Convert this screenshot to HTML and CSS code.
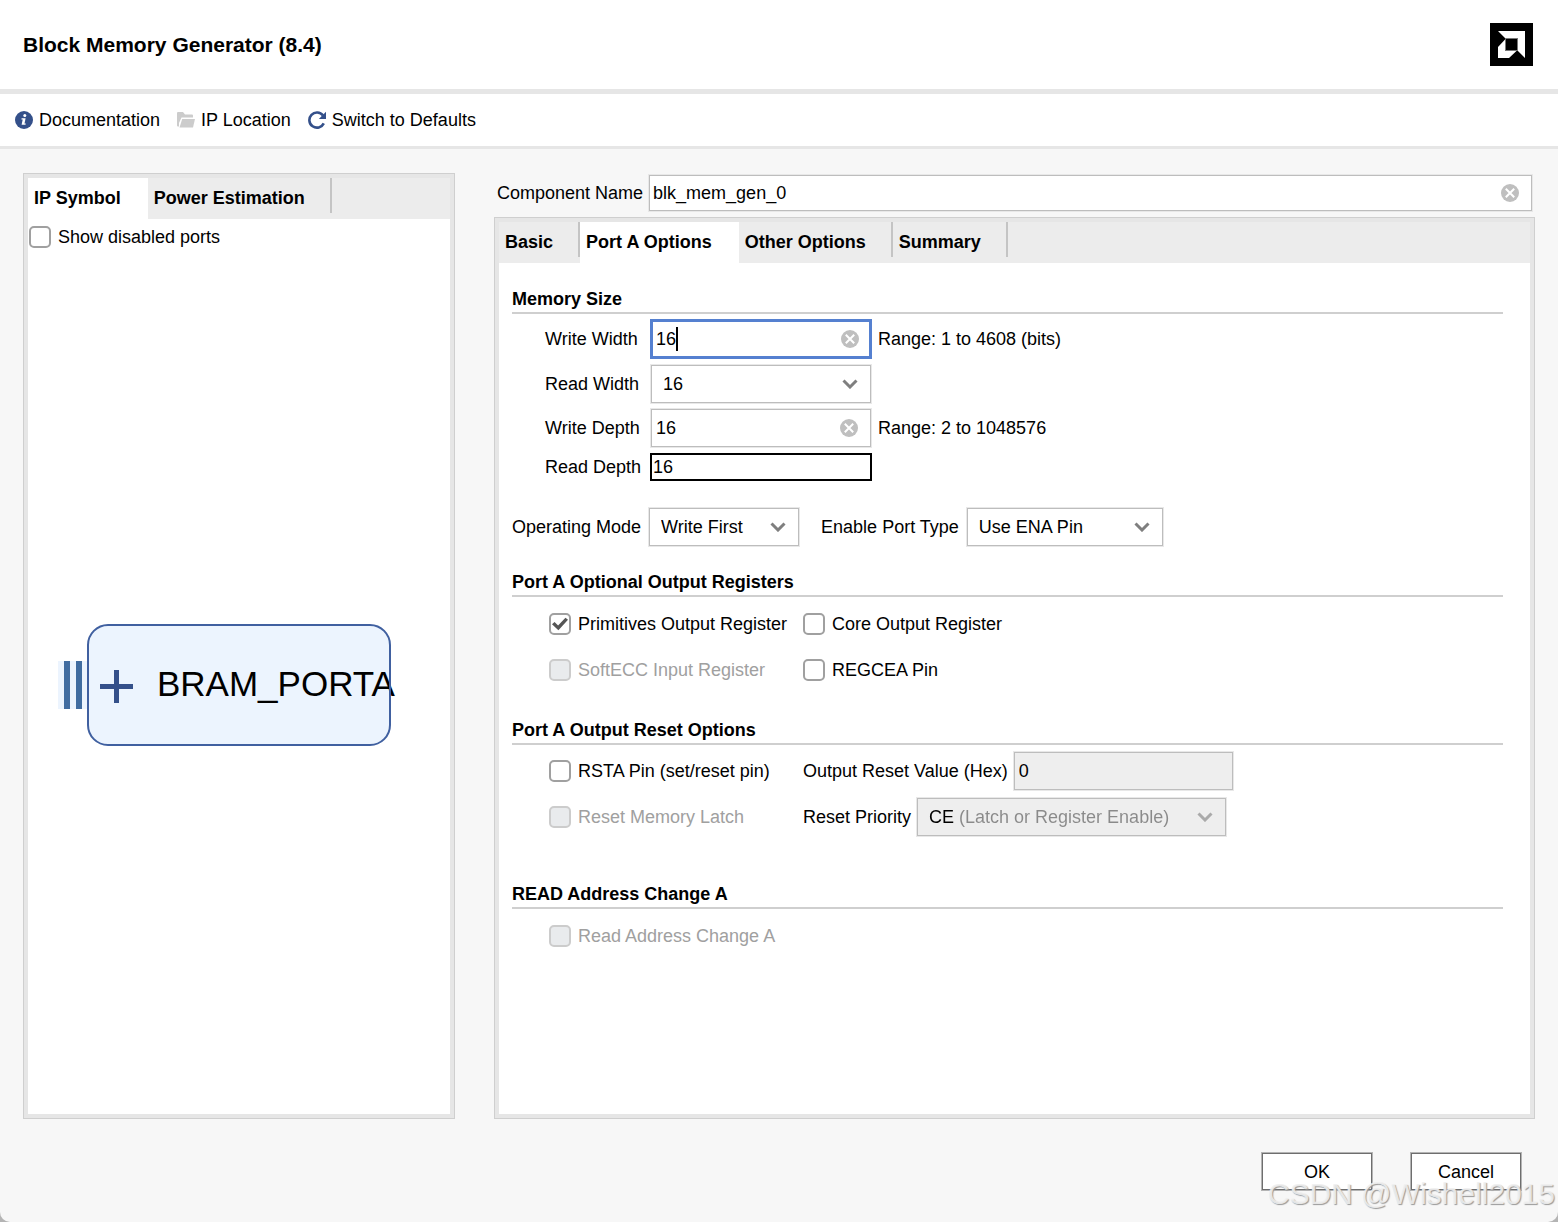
FILE: index.html
```html
<!DOCTYPE html>
<html lang="en">
<head>
    <meta charset="UTF-8">
    <meta name="viewport" content="width=device-width, initial-scale=1.0">
    <title>Block Memory Generator (8.4)</title>
    <link rel="stylesheet" href="styles.css">
</head>
<body>
    <div class="window">
        <header class="header">
            <h1>Block Memory Generator (8.4)</h1>
            <svg class="logo" viewBox="0 0 43 43">
                <rect width="43" height="43" fill="#000"/>
                <path d="M8 8H35V35L27.5 27.5V15.5H15.5Z" fill="#fff"/>
                <path d="M8 24L15.5 16V27.5H27L19 35H8Z" fill="#fff"/>
                <rect x="15.5" y="15.5" width="12" height="12" fill="#000" stroke="#777" stroke-width="1"/>
            </svg>
        </header>

        <nav class="toolbar">
            <button class="tool">
                <svg class="icon" viewBox="0 0 18 18">
                    <circle cx="9" cy="9" r="9" fill="#34508a"/>
                    <circle cx="9.8" cy="4.6" r="1.5" fill="#fff"/>
                    <path d="M6.6 7.2H10.6L9.5 12.4H10.8L10.5 13.8H6.6L7.7 8.6H6.4Z" fill="#fff"/>
                </svg>
                Documentation
            </button>
            <button class="tool">
                <svg class="icon" viewBox="0 0 18 18">
                    <path d="M0 2Q0 1 1 1H6L8 3.5H15Q16 3.5 16 4.5V6.5H4.5L2 12V15.5H1Q0 15.5 0 14.5Z" fill="#ccc"/>
                    <path d="M5.2 8H18L16 16.5H2.5Z" fill="#ccc"/>
                </svg>
                IP Location
            </button>
            <button class="tool">
                <svg class="icon" viewBox="0 0 18 18">
                    <path d="M15 4.4A7.6 7.6 0 1 0 15.8 12.4" fill="none" stroke="#34508a" stroke-width="2.6"/>
                    <path d="M18 .8V8H10.8Z" fill="#34508a"/>
                </svg>
                Switch to Defaults
            </button>
        </nav>

        <main class="main">
            <section class="panel symbol-panel">
                <div class="tabs">
                    <button class="tab active">IP Symbol</button>
                    <button class="tab">Power Estimation</button>
                </div>
                <label class="check ports"><input type="checkbox">Show disabled ports</label>
                <div class="canvas">
                    <svg class="symbol" viewBox="0 0 362 122">
                        <rect x="0" y="37" width="30" height="48" fill="#ecf4fe"/>
                        <rect x="6" y="37" width="6" height="48" fill="#406ca0"/>
                        <rect x="18" y="37" width="6" height="48" fill="#406ca0"/>
                        <rect x="30" y="1" width="302" height="120" rx="20" fill="#ecf4fe"/>
                        <path d="M42 62.5H75M58.5 46V79" stroke="#34508a" stroke-width="5"/>
                        <text class="symbol-text" x="99" y="72">BRAM_PORTA</text>
                        <rect x="30" y="1" width="302" height="120" rx="20" fill="none" stroke="#4060a0" stroke-width="2"/>
                    </svg>
                </div>
            </section>

            <div class="config">
                <div class="name-row">
                    <label for="name">Component Name</label>
                    <div class="field name-field">
                        <input class="input" type="text" id="name" value="blk_mem_gen_0">
                        <button class="clear" aria-label="Clear"><svg viewBox="0 0 18 18"><circle cx="9" cy="9" r="9"/><path d="M4.8 4.8L13.2 13.2M13.2 4.8L4.8 13.2"/></svg></button>
                    </div>
                </div>

                <section class="panel">
                    <div class="tabs">
                        <button class="tab">Basic</button>
                        <button class="tab active">Port A Options</button>
                        <button class="tab">Other Options</button>
                        <button class="tab">Summary</button>
                    </div>

                    <form class="options">
                        <h2>Memory Size</h2>
                        <div class="sizes">
                            <div class="row">
                                <label for="write-width">Write Width</label>
                                <div class="field">
                                    <input class="input focused" type="text" id="write-width" value="16">
                                    <span class="caret"></span>
                                    <button type="button" class="clear" aria-label="Clear"><svg viewBox="0 0 18 18"><circle cx="9" cy="9" r="9"/><path d="M4.8 4.8L13.2 13.2M13.2 4.8L4.8 13.2"/></svg></button>
                                </div>
                                <span>Range: 1 to 4608 (bits)</span>
                            </div>
                            <div class="row">
                                <label for="read-width">Read Width</label>
                                <div class="field inset">
                                    <select class="input" id="read-width"><option>16</option></select>
                                    <svg class="chevron" viewBox="0 0 16 10"><path d="M1.5 1.5L8 8L14.5 1.5"/></svg>
                                </div>
                            </div>
                            <div class="row">
                                <label for="write-depth">Write Depth</label>
                                <div class="field inset">
                                    <input class="input" type="text" id="write-depth" value="16">
                                    <button type="button" class="clear" aria-label="Clear"><svg viewBox="0 0 18 18"><circle cx="9" cy="9" r="9"/><path d="M4.8 4.8L13.2 13.2M13.2 4.8L4.8 13.2"/></svg></button>
                                </div>
                                <span>Range: 2 to 1048576</span>
                            </div>
                            <div class="row">
                                <label for="read-depth">Read Depth</label>
                                <div class="field">
                                    <input class="input plain" type="text" id="read-depth" value="16" readonly>
                                </div>
                            </div>
                        </div>

                        <div class="modes">
                            <div class="pair">
                                <label for="mode">Operating Mode</label>
                                <div class="field mode">
                                    <select class="input" id="mode"><option>Write First</option></select>
                                    <svg class="chevron" viewBox="0 0 16 10"><path d="M1.5 1.5L8 8L14.5 1.5"/></svg>
                                </div>
                            </div>
                            <div class="pair">
                                <label for="port-type">Enable Port Type</label>
                                <div class="field port-type">
                                    <select class="input" id="port-type"><option>Use ENA Pin</option></select>
                                    <svg class="chevron" viewBox="0 0 16 10"><path d="M1.5 1.5L8 8L14.5 1.5"/></svg>
                                </div>
                            </div>
                        </div>

                        <h2>Port A Optional Output Registers</h2>
                        <div class="checks">
                            <label class="check"><input type="checkbox" checked>Primitives Output Register</label>
                            <label class="check"><input type="checkbox">Core Output Register</label>
                            <label class="check disabled"><input type="checkbox" disabled>SoftECC Input Register</label>
                            <label class="check"><input type="checkbox">REGCEA Pin</label>
                        </div>

                        <h2>Port A Output Reset Options</h2>
                        <div class="checks resets">
                            <label class="check"><input type="checkbox">RSTA Pin (set/reset pin)</label>
                            <div class="pair">
                                <label for="reset-value">Output Reset Value (Hex)</label>
                                <div class="field reset-value">
                                    <input class="input" type="text" id="reset-value" value="0" disabled>
                                </div>
                            </div>
                            <label class="check disabled"><input type="checkbox" disabled>Reset Memory Latch</label>
                            <div class="pair">
                                <label for="priority">Reset Priority</label>
                                <div class="field priority">
                                    <select class="input" id="priority" disabled><option>CE (Latch or Register Enable)</option></select>
                                    <svg class="chevron" viewBox="0 0 16 10"><path d="M1.5 1.5L8 8L14.5 1.5"/></svg>
                                </div>
                            </div>
                        </div>

                        <h2>READ Address Change A</h2>
                        <div class="checks">
                            <label class="check disabled"><input type="checkbox" disabled>Read Address Change A</label>
                        </div>
                    </form>
                </section>
            </div>
        </main>

        <footer class="footer">
            <button class="btn">OK</button>
            <button class="btn">Cancel</button>
        </footer>
        <div class="watermark">CSDN @Wishell2015</div>
    </div>
</body>
</html>
```
FILE: styles.css
```css
:root {
    --bg-window: #f7f7f7;
    --bg-tabs: #ececec;
    --frame: #e6e6e6;
    --line: #cfcfcf;
    --border: #bdbdbd;
    --blue: #5580d0;
    --text-disabled: #a0a0a0;
}

* {
    box-sizing: border-box;
}

body {
    margin: 0;
    background-color: #b4b4b4;
    font-family: "Liberation Sans", Arial, sans-serif;
    font-size: 18px;
    line-height: 22px;
    color: #000;
}

button, input, select {
    font: inherit;
    color: inherit;
    margin: 0;
}

button {
    border: none;
    background: none;
    padding: 0;
    cursor: pointer;
}

.window {
    position: relative;
    display: flex;
    flex-direction: column;
    min-height: 100vh;
    background-color: var(--bg-window);
    border-radius: 0 0 10px 10px;
}

/* Header */
.header {
    display: flex;
    justify-content: space-between;
    align-items: center;
    padding: 23px 25px 23px 23px;
    background-color: #fff;
    border-bottom: 5px solid var(--frame);
}

.header h1 {
    margin: 0;
    font-size: 21px;
}

.logo {
    width: 43px;
    height: 43px;
}

.toolbar {
    display: flex;
    gap: 17px;
    padding: 15px;
    background-color: #fff;
    border-bottom: 3px solid var(--frame);
}

.tool {
    display: flex;
    align-items: center;
    gap: 6px;
}

.icon {
    width: 18px;
    height: 18px;
}

/* Panels */
.main {
    flex: 1;
    display: flex;
    gap: 39px;
    padding: 24px 23px 0;
}

.panel {
    flex: 1;
    display: flex;
    flex-direction: column;
    background-color: #fff;
    border: 1px solid var(--line);
    box-shadow: inset 0 0 0 4px var(--frame);
    padding: 4px;
}

.symbol-panel {
    flex: none;
    width: 432px;
}

.config {
    flex: 1;
    display: flex;
    flex-direction: column;
}

.tabs {
    display: flex;
    height: 41px;
    background-color: var(--bg-tabs);
}

.tab {
    position: relative;
    padding: 0 27px 2px 6px;
    font-weight: bold;
}

.tab:not(.active)::after {
    content: "";
    position: absolute;
    top: 0;
    right: 0;
    width: 2px;
    height: 35px;
    background-color: #c4c4c4;
}

.tab.active {
    background-color: #fff;
}

.canvas {
    flex: 1;
    display: flex;
    align-items: center;
    justify-content: center;
}

.symbol {
    width: 362px;
    height: 122px;
}

.symbol-text {
    font-size: 35px;
}

/* Fields */
.name-row {
    display: flex;
    align-items: center;
    gap: 6px;
    height: 40px;
    margin-bottom: 4px;
    padding: 0 3px;
}

.field {
    position: relative;
    width: 222px;
}

.name-field {
    flex: 1;
}

.input {
    display: block;
    width: 100%;
    height: 38px;
    padding: 0 4px;
    border: 1px solid var(--border);
    border-radius: 0;
    box-shadow: 0 0 0 1px #e8e8e8;
    background-color: #fff;
    outline: none;
}

.name-field .input {
    height: 36px;
    padding: 0 3px;
}

select.input {
    appearance: none;
    padding: 0 11px;
}

.inset {
    padding: 0 1px;
}

.input.focused {
    height: 40px;
    padding: 0 3px;
    border: 3px solid var(--blue);
    box-shadow: none;
}

.input.plain {
    height: 28px;
    padding: 0 1px;
    border: 2px solid #000;
    box-shadow: none;
}

.input:disabled {
    background-color: #eee;
    color: #000;
    opacity: 1;
}

.caret {
    position: absolute;
    left: 26px;
    top: 8px;
    width: 2px;
    height: 24px;
    background-color: #000;
}

.clear {
    position: absolute;
    top: 0;
    bottom: 0;
    right: 13px;
    display: flex;
    align-items: center;
}

.clear svg {
    width: 18px;
    height: 18px;
    fill: #bfbfbf;
    stroke: #fff;
    stroke-width: 2;
}

.clear circle {
    stroke: none;
}

.chevron {
    position: absolute;
    top: 14px;
    right: 13px;
    width: 16px;
    height: 10px;
    fill: none;
    stroke: #7f7f7f;
    stroke-width: 3;
    pointer-events: none;
}

.inset .clear,
.inset .chevron {
    right: 14px;
}

/* Port A options */
.options {
    padding: 0 27px 0 13px;
}

.options h2 {
    margin: 23px 0 0;
    padding: 2px 0;
    border-bottom: 2px solid var(--line);
    font-size: 18px;
}

.sizes {
    display: flex;
    flex-direction: column;
    gap: 6px;
    padding: 5px 0 0 33px;
}

.row {
    display: flex;
    align-items: center;
}

.row label {
    width: 105px;
}

.row span:last-child {
    margin-left: 6px;
}

.modes {
    display: flex;
    gap: 22px;
    margin-top: 27px;
}

.pair {
    display: flex;
    align-items: center;
    gap: 6px;
}

.modes .pair {
    gap: 8px;
}

.mode {
    width: 150px;
}

.port-type {
    width: 196px;
}

.reset-value {
    width: 219px;
}

.priority {
    width: 309px;
    background-color: #eee;
}

/* value in black, description in grey */
.priority .input:disabled {
    background: linear-gradient(90deg, #000 39px, #8a8a8a 39px);
    -webkit-background-clip: text;
    background-clip: text;
    color: transparent;
}

.priority .chevron {
    stroke: #aaa;
}

.checks {
    display: grid;
    grid-template-columns: 254px 1fr;
    align-items: center;
    row-gap: 24px;
    padding: 16px 0 13px 37px;
}

.resets {
    row-gap: 8px;
    padding: 7px 0 22px 37px;
}

.check {
    display: flex;
    align-items: center;
    gap: 7px;
}

.check input {
    appearance: none;
    display: grid;
    place-items: center;
    width: 22px;
    height: 22px;
    border: 2px solid #a0a0a0;
    border-radius: 5px;
    background-color: #fff;
}

.check input:checked::before {
    content: "";
    width: 16px;
    height: 14px;
    background-color: #555;
    clip-path: polygon(0 52%, 16% 36%, 38% 60%, 84% 6%, 100% 20%, 40% 94%);
}

.check input:disabled {
    border-color: #ccc;
    background-color: #e9ebed;
}

.check.disabled {
    color: var(--text-disabled);
}

.ports {
    padding: 7px 0 8px 1px;
}

/* Footer */
.footer {
    display: flex;
    justify-content: flex-end;
    gap: 37px;
    padding: 33px 36px 31px;
}

.btn {
    width: 112px;
    height: 39px;
    border: 1px solid #b4b4b4;
    box-shadow: inset 0 0 0 1px #6e6e6e;
    background-color: #fff;
}

.watermark {
    position: absolute;
    right: 3px;
    bottom: 11px;
    font-size: 30px;
    line-height: 34px;
    color: rgba(240, 240, 240, 0.9);
    text-shadow: 1px 1px 1px #999;
    pointer-events: none;
}
```
